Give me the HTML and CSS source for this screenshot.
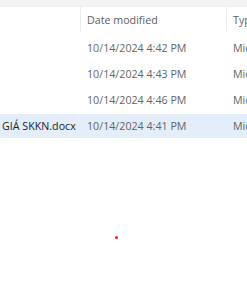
FILE: index.html
```html
<!DOCTYPE html>
<html>
<head>
<meta charset="utf-8">
<link rel="stylesheet" href="styles.css">
</head>
<body>
<div class="view">
  <div class="topbar"></div>
  <div class="header">
    <div class="cell name"></div>
    <div class="cell date head">Date modified</div>
    <div class="cell type head">Type</div>
  </div>
  <div class="rows">
    <div class="row">
      <div class="cell name"></div>
      <div class="cell date">10/14/2024 4:42 PM</div>
      <div class="cell type">Microsoft Word Document</div>
    </div>
    <div class="row">
      <div class="cell name"></div>
      <div class="cell date">10/14/2024 4:43 PM</div>
      <div class="cell type">Microsoft Word Document</div>
    </div>
    <div class="row">
      <div class="cell name"></div>
      <div class="cell date">10/14/2024 4:46 PM</div>
      <div class="cell type">Microsoft Word Document</div>
    </div>
    <div class="row selected">
      <div class="cell name">GIÁ SKKN.docx</div>
      <div class="cell date">10/14/2024 4:41 PM</div>
      <div class="cell type">Microsoft Word Document</div>
    </div>
  </div>
  <div class="dot"></div>
</div>
</body>
</html>
```
FILE: styles.css
```css
html, body {
  margin: 0;
  padding: 0;
  background: #ffffff;
}
.view {
  position: relative;
  width: 247px;
  height: 296px;
  overflow: hidden;
  font-family: "Open Sans", "Noto Sans", sans-serif;
  font-size: 10.7px;
}
.topbar {
  height: 6px;
  background: #f3f3f3;
  border-bottom: 1px solid #efefef;
}
.header, .row {
  display: grid;
  grid-template-columns: 80px 146px 1fr;
  height: 24px;
  align-items: stretch;
}
.header {
  height: 25px;
}
.cell {
  display: flex;
  align-items: center;
  white-space: nowrap;
  overflow: hidden;
}
.header .date, .header .type {
  border-left: 1px solid #ebebeb;
}
.head {
  color: #5e5e5e;
  padding-left: 6px;
}
.rows {
  display: flex;
  flex-direction: column;
  gap: 2px;
  padding-top: 4px;
}
.row .date {
  color: #646464;
  padding-left: 7px;
}
.row .type {
  color: #646464;
  padding-left: 7px;
}
.row .name {
  color: #1e1e1e;
  padding-left: 2px;
}
.selected {
  background: #e3eefa;
}
.dot {
  position: absolute;
  left: 115px;
  top: 236px;
  width: 3px;
  height: 3px;
  border-radius: 50%;
  background: #e82020;
}
```
